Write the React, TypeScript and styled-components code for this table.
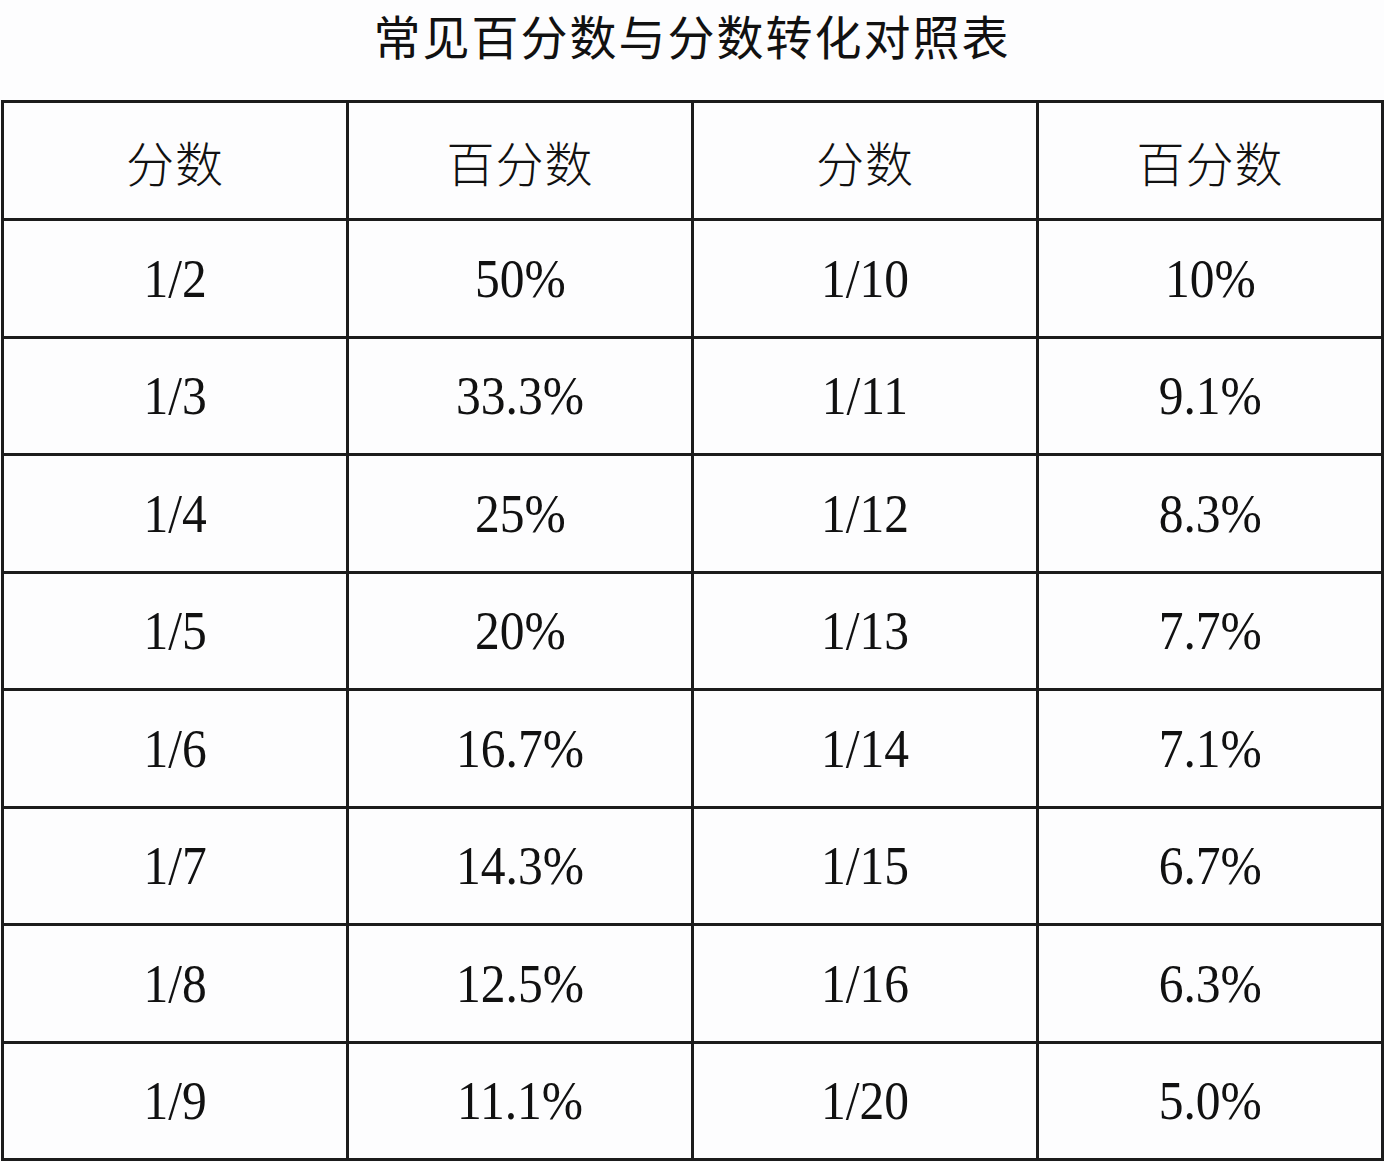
import { FC } from 'react';
import styled, { createGlobalStyle } from 'styled-components';

const rows: [string, string, string, string][] = [
  ['1/2', '50%', '1/10', '10%'],
  ['1/3', '33.3%', '1/11', '9.1%'],
  ['1/4', '25%', '1/12', '8.3%'],
  ['1/5', '20%', '1/13', '7.7%'],
  ['1/6', '16.7%', '1/14', '7.1%'],
  ['1/7', '14.3%', '1/15', '6.7%'],
  ['1/8', '12.5%', '1/16', '6.3%'],
  ['1/9', '11.1%', '1/20', '5.0%'],
];

const heads = ['分数', '百分数', '分数', '百分数'];

const App: FC = () => {
  return (
    <>
      <GlobalStyle />
      <Page>
        <Title>常见百分数与分数转化对照表</Title>
        <Table>
          <thead>
            <tr>
              {heads.map((h, i) => (
                <HeadCell key={i}>{h}</HeadCell>
              ))}
            </tr>
          </thead>
          <tbody>
            {rows.map((r, i) => (
              <tr key={i}>
                {r.map((v, j) => (
                  <Cell key={j}>
                    <Num>{v}</Num>
                  </Cell>
                ))}
              </tr>
            ))}
          </tbody>
        </Table>
      </Page>
    </>
  );
};

const GlobalStyle = createGlobalStyle`
  html, body {
    margin: 0;
    padding: 0;
    background: #fdfdfe;
  }
`;

const Page = styled.div`
  width: 1384px;
  height: 1162px;
  background: #fdfdfe;
  color: #111;
  overflow: hidden;
`;

const Title = styled.h1`
  margin: 0;
  height: 100px;
  box-sizing: border-box;
  padding-top: 6px;
  text-align: center;
  font-family: 'Noto Sans CJK SC', sans-serif;
  font-weight: 400;
  font-size: 47px;
  line-height: 58px;
  letter-spacing: 2px;
  color: #111;
`;

const Table = styled.table`
  width: 1383px;
  margin-left: 1px;
  border-collapse: collapse;
  table-layout: fixed;
  border: 3px solid #1c1c1c;
  td,
  th {
    border: 3px solid #1c1c1c;
    text-align: center;
    vertical-align: middle;
    padding: 0;
  }
`;

const HeadCell = styled.th`
  height: 115px;
  font-family: 'Noto Sans CJK SC', serif;
  font-weight: 300;
  font-size: 48px;
  letter-spacing: 1px;
  color: #111;
`;

const Cell = styled.td`
  height: 114.5px;
`;

const Num = styled.span`
  display: inline-block;
  font-family: 'Liberation Serif', 'Times New Roman', serif;
  font-size: 55px;
  line-height: 1;
  transform: scaleX(0.9);
  color: #111;
`;

export default App;
